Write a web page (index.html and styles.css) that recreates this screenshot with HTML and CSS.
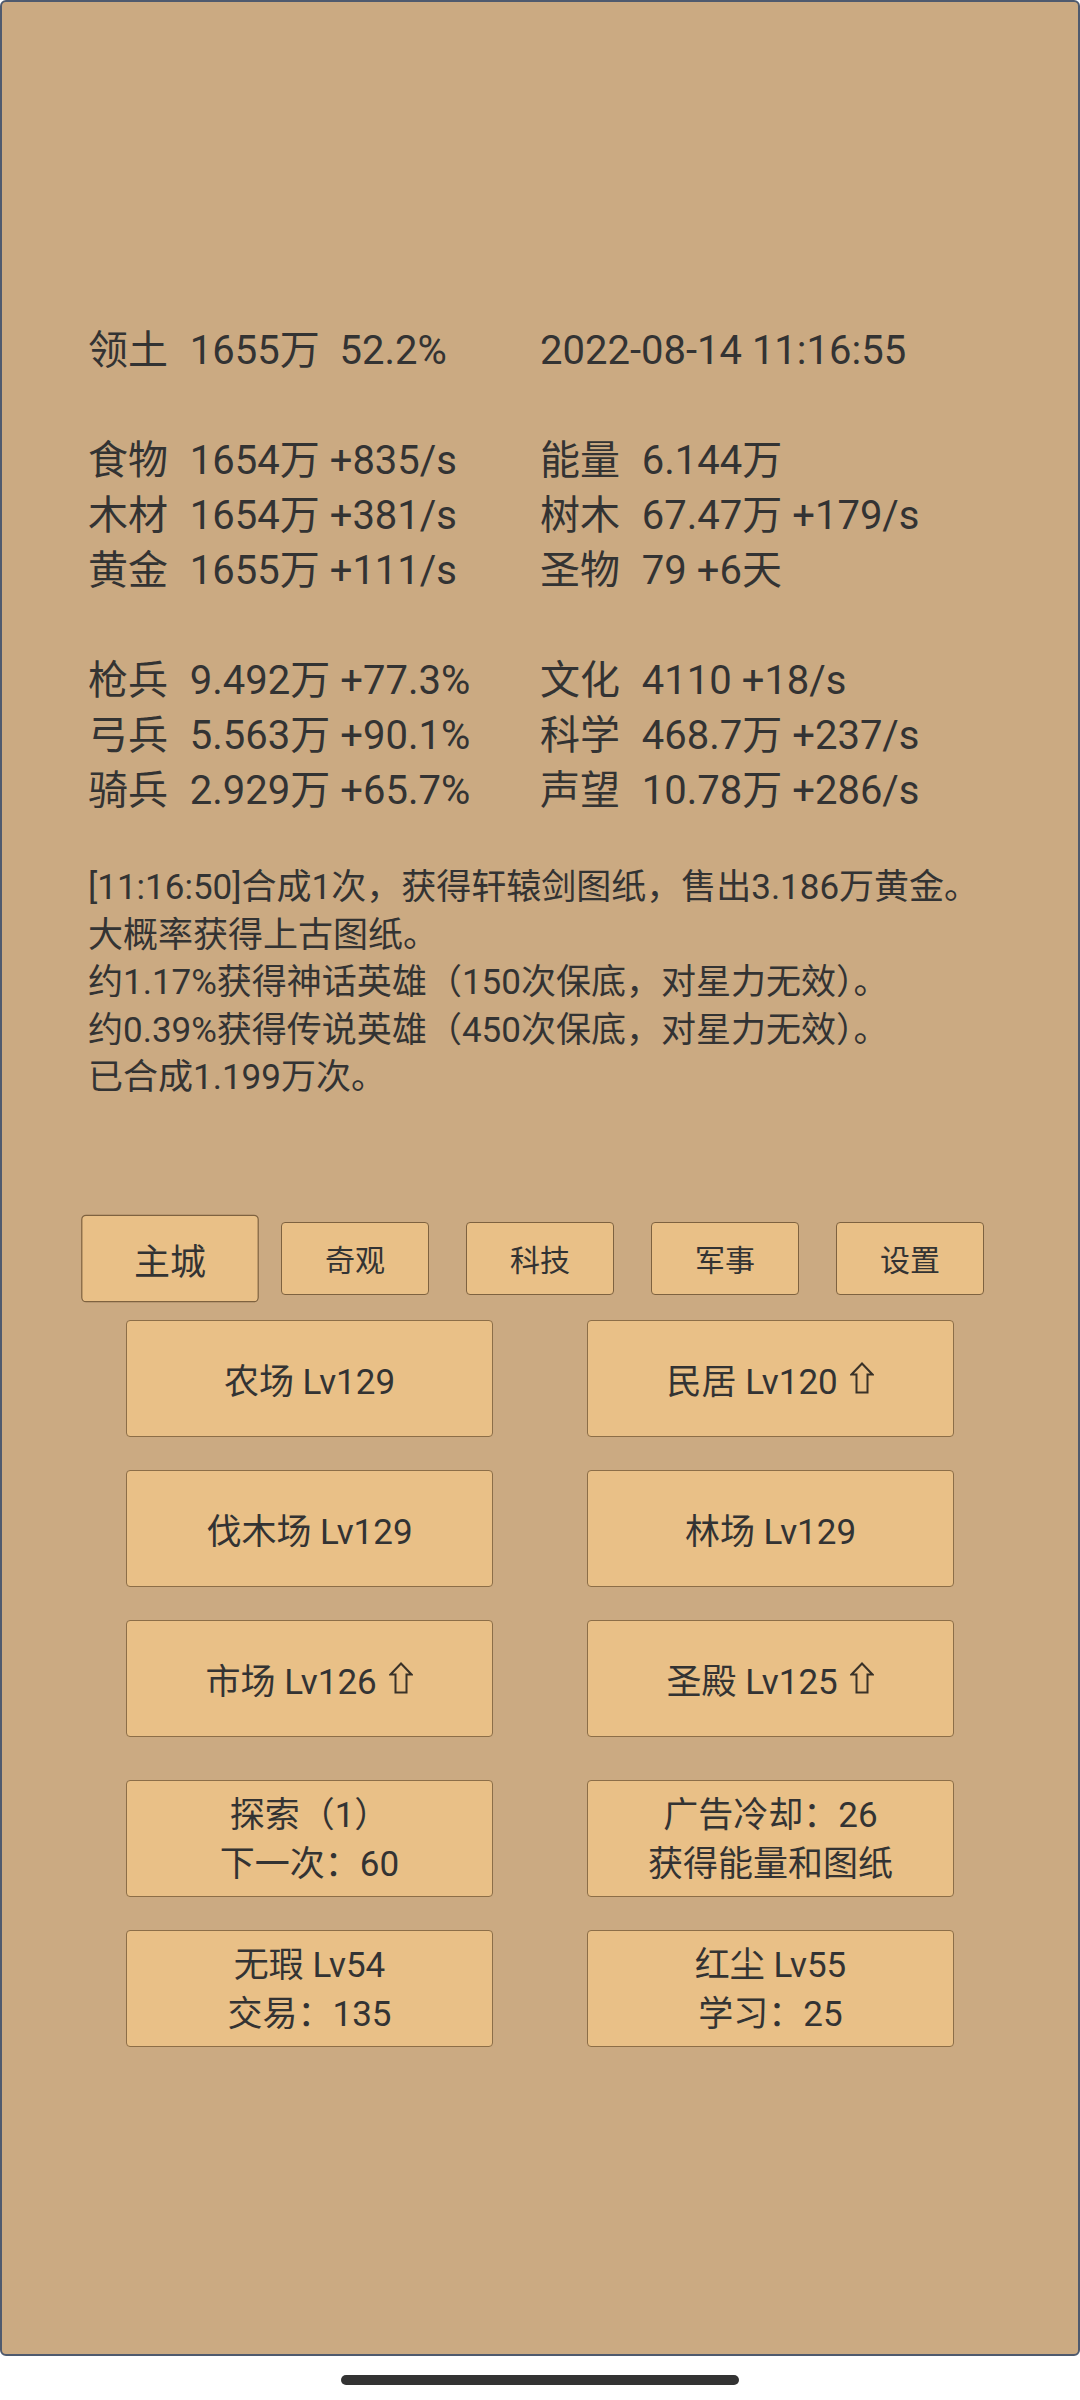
FILE: index.html
```html
<!DOCTYPE html>
<html lang="zh-CN">
<head>
<meta charset="utf-8">
<title>主城</title>
<link rel="stylesheet" href="styles.css">
</head>
<body>
<div class="screen">
  <main class="panel">
    <section class="stats">
      <div class="cell"><span class="lbl">领土</span>  1655万  52.2%</div>
      <div class="cell">2022-08-14 11:16:55</div>
      <div class="blank"></div>
      <div class="cell"><span class="lbl">食物</span>  1654万 +835/s</div>
      <div class="cell"><span class="lbl">能量</span>  6.144万</div>
      <div class="cell"><span class="lbl">木材</span>  1654万 +381/s</div>
      <div class="cell"><span class="lbl">树木</span>  67.47万 +179/s</div>
      <div class="cell"><span class="lbl">黄金</span>  1655万 +111/s</div>
      <div class="cell"><span class="lbl">圣物</span>  79 +6天</div>
      <div class="blank"></div>
      <div class="cell"><span class="lbl">枪兵</span>  9.492万 +77.3%</div>
      <div class="cell"><span class="lbl">文化</span>  4110 +18/s</div>
      <div class="cell"><span class="lbl">弓兵</span>  5.563万 +90.1%</div>
      <div class="cell"><span class="lbl">科学</span>  468.7万 +237/s</div>
      <div class="cell"><span class="lbl">骑兵</span>  2.929万 +65.7%</div>
      <div class="cell"><span class="lbl">声望</span>  10.78万 +286/s</div>
    </section>

    <section class="log">
      <p>[11:16:50]合成1次，获得轩辕剑图纸，售出3.186万黄金。</p>
      <p>大概率获得上古图纸。</p>
      <p>约1.17%获得神话英雄（150次保底，对星力无效）。</p>
      <p>约0.39%获得传说英雄（450次保底，对星力无效）。</p>
      <p>已合成1.199万次。</p>
    </section>

    <nav class="tabs">
      <div class="tab tab-active">主城</div>
      <div class="tab">奇观</div>
      <div class="tab">科技</div>
      <div class="tab">军事</div>
      <div class="tab">设置</div>
    </nav>

    <section class="grid">
      <div class="btn">农场 Lv129</div>
      <div class="btn">民居 Lv120 <svg class="up" viewBox="0 0 24 32" width="24" height="32"><path d="M12 1.5 L22.5 12.5 L17.5 12.5 L17.5 30.5 L6.5 30.5 L6.5 12.5 L1.5 12.5 Z"/></svg></div>
      <div class="btn">伐木场 Lv129</div>
      <div class="btn">林场 Lv129</div>
      <div class="btn">市场 Lv126 <svg class="up" viewBox="0 0 24 32" width="24" height="32"><path d="M12 1.5 L22.5 12.5 L17.5 12.5 L17.5 30.5 L6.5 30.5 L6.5 12.5 L1.5 12.5 Z"/></svg></div>
      <div class="btn">圣殿 Lv125 <svg class="up" viewBox="0 0 24 32" width="24" height="32"><path d="M12 1.5 L22.5 12.5 L17.5 12.5 L17.5 30.5 L6.5 30.5 L6.5 12.5 L1.5 12.5 Z"/></svg></div>
    </section>

    <section class="grid grid-lower">
      <div class="btn btn-two"><span>探索（1）</span><span>下一次：60</span></div>
      <div class="btn btn-two"><span>广告冷却：26</span><span>获得能量和图纸</span></div>
      <div class="btn btn-two"><span>无瑕 Lv54</span><span>交易：135</span></div>
      <div class="btn btn-two"><span>红尘 Lv55</span><span>学习：25</span></div>
    </section>
  </main>
  <div class="home-bar"></div>
</div>
</body>
</html>
```
FILE: styles.css
```css
* { box-sizing: border-box; }

html, body {
  margin: 0;
  padding: 0;
  background: #ffffff;
}

body {
  width: 1080px;
  height: 2400px;
  overflow: hidden;
  font-family: Roboto, "Noto Sans CJK SC", sans-serif;
  color: #333333;
}

.screen {
  display: flex;
  flex-direction: column;
  align-items: center;
  width: 1080px;
  height: 2400px;
}

.panel {
  width: 1080px;
  height: 2356px;
  background: #cbaa82;
  border: 2px solid #4f5a6e;
  border-radius: 6px;
  padding: 321px 0 0 86px;
  display: flex;
  flex-direction: column;
}

.stats {
  display: grid;
  grid-template-columns: 452px auto;
  font-size: 40px;
  line-height: 55px;
}

.cell {
  white-space: pre;
}

.lbl {
  margin-right: 2px;
}

.blank {
  grid-column: 1 / span 2;
  height: 55px;
}

.log {
  margin-top: 46px;
  font-size: 35px;
  line-height: 47.5px;
}

.log p {
  margin: 0;
  white-space: nowrap;
}

.tabs {
  margin: 120px 0 0 -86px;
  display: flex;
  justify-content: center;
  gap: 37px;
  width: 1076px;
}

.tab {
  width: 148px;
  height: 73px;
  display: flex;
  align-items: center;
  justify-content: center;
  background: #e9c087;
  border: 1.5px solid #7e6240;
  border-radius: 4px;
  font-size: 30px;
  color: #333333;
}

.tab-active {
  transform: scale(1.2);
}

.grid {
  margin: 25px 0 0 -86px;
  width: 1076px;
  display: grid;
  grid-template-columns: 367px 367px;
  grid-auto-rows: 117px;
  column-gap: 94px;
  row-gap: 33px;
  justify-content: center;
}

.grid-lower {
  margin-top: 43px;
}

.btn {
  background: #e9c087;
  border: 1.5px solid #8c6e48;
  border-radius: 4px;
  display: flex;
  align-items: center;
  justify-content: center;
  font-size: 35px;
  white-space: pre;
}

.btn-two {
  flex-direction: column;
  line-height: 49px;
  padding-top: 3px;
}

.up {
  display: block;
  margin-left: 4px;
  fill: none;
  stroke: #3a3228;
  stroke-width: 2;
  stroke-linejoin: miter;
}

.home-bar {
  margin-top: 19px;
  width: 398px;
  height: 10px;
  border-radius: 5px;
  background: #333333;
}
```
